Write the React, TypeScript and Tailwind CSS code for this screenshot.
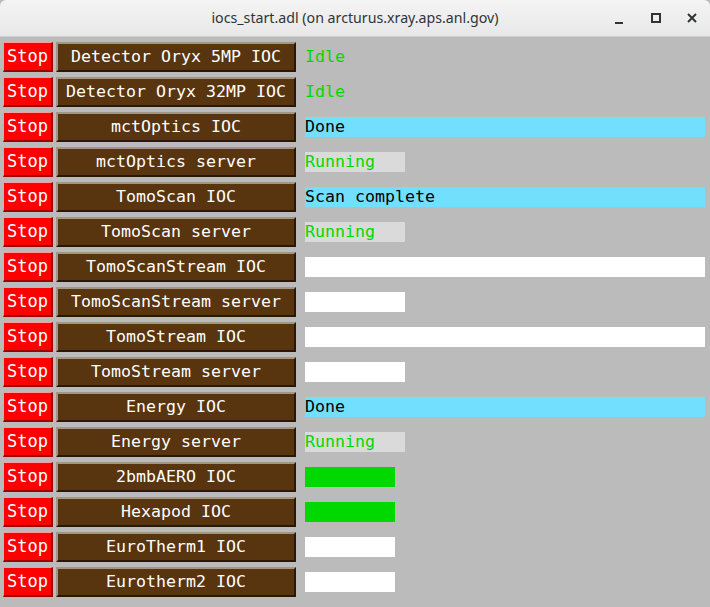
import React from "react";

type Status = {
  text?: string;
  kind: "none" | "idle" | "done" | "running" | "white" | "green";
  wide?: boolean;
  width?: string;
};

type Row = { label: string; status: Status };

const rows: Row[] = [
  { label: "Detector Oryx 5MP IOC", status: { kind: "idle", text: "Idle" } },
  { label: "Detector Oryx 32MP IOC", status: { kind: "idle", text: "Idle" } },
  { label: "mctOptics IOC", status: { kind: "done", text: "Done" } },
  { label: "mctOptics server", status: { kind: "running", text: "Running" } },
  { label: "TomoScan IOC", status: { kind: "done", text: "Scan complete" } },
  { label: "TomoScan server", status: { kind: "running", text: "Running" } },
  { label: "TomoScanStream IOC", status: { kind: "white", wide: true } },
  { label: "TomoScanStream server", status: { kind: "white" } },
  { label: "TomoStream IOC", status: { kind: "white", wide: true } },
  { label: "TomoStream server", status: { kind: "white" } },
  { label: "Energy IOC", status: { kind: "done", text: "Done" } },
  { label: "Energy server", status: { kind: "running", text: "Running" } },
  { label: "2bmbAERO IOC", status: { kind: "green" } },
  { label: "Hexapod IOC", status: { kind: "green" } },
  { label: "EuroTherm1 IOC", status: { kind: "white", width: "small" } },
  { label: "Eurotherm2 IOC", status: { kind: "white", width: "small" } },
];

const mono = { fontFamily: '"DejaVu Sans Mono", "Liberation Mono", monospace' };

function StatusBox({ status }: { status: Status }) {
  if (status.kind === "idle") {
    return (
      <div className="h-[20px] leading-[20px] text-[16.6px] text-[#00d800]">{status.text}</div>
    );
  }
  if (status.kind === "done") {
    return (
      <div className="h-[20px] w-[400px] bg-[#73dfff] leading-[20px] text-[16.6px] text-black">
        {status.text}
      </div>
    );
  }
  if (status.kind === "running") {
    return (
      <div className="h-[20px] w-[100px] bg-[#dadada] leading-[20px] text-[16.6px] text-[#00d800]">
        {status.text}
      </div>
    );
  }
  if (status.kind === "green") {
    return <div className="h-[20px] w-[90px] bg-[#00d800]" />;
  }
  if (status.width === "small") {
    return <div className="h-[20px] w-[90px] bg-white" />;
  }
  return <div className={status.wide ? "h-[20px] w-[400px] bg-white" : "h-[20px] w-[100px] bg-white"} />;
}

function TitleBar() {
  return (
    <div className="relative flex h-[37px] items-center justify-center rounded-t-[6px] border-b border-[#cfcfcf] bg-gradient-to-b from-[#f4f4f4] to-[#e8e8e8]">
      <span
        className="text-[14.2px] text-[#2e3436]"
        style={{ fontFamily: '"Noto Sans", "DejaVu Sans", sans-serif' }}
      >
        iocs_start.adl (on arcturus.xray.aps.anl.gov)
      </span>
      <div className="absolute right-0 top-0 flex h-full items-center">
        <svg width="36" height="37" viewBox="0 0 36 37" className="mr-[1px]">
          <rect x="14" y="22" width="8" height="2" fill="#2e3436" />
        </svg>
        <svg width="36" height="37" viewBox="0 0 36 37">
          <rect x="14" y="14" width="8" height="8" fill="none" stroke="#2e3436" strokeWidth="2" />
        </svg>
        <svg width="36" height="37" viewBox="0 0 36 37">
          <path d="M14 14 L22 22 M22 14 L14 22" stroke="#2e3436" strokeWidth="2" />
        </svg>
      </div>
    </div>
  );
}

export default function App() {
  return (
    <div className="h-[607px] w-[710px] overflow-hidden bg-[#bbbbbb]" style={mono}>
      <TitleBar />
      <div className="flex flex-col gap-[5px] pt-[5px]">
        {rows.map((row) => (
          <div key={row.label} className="flex h-[30px] items-center">
            <button className="ml-[3px] flex h-[30px] w-[50px] items-center justify-center border-l border-t border-b-2 border-r-2 border-l-[#ff9a9a] border-t-[#ff9a9a] border-b-[#9c0000] border-r-[#9c0000] bg-[#fd0000] pt-[1px] text-[17px] text-white">
              Stop
            </button>
            <button className="ml-[3px] flex h-[30px] w-[240px] items-center justify-center border-l-2 border-t-2 border-b-2 border-r-2 border-l-[#a39584] border-t-[#a39584] border-b-[#2a1806] border-r-[#2a1806] bg-[#58340f] pt-[1px] text-[16.6px] text-white">
              {row.label}
            </button>
            <div className="ml-[9px]">
              <StatusBox status={row.status} />
            </div>
          </div>
        ))}
      </div>
    </div>
  );
}
